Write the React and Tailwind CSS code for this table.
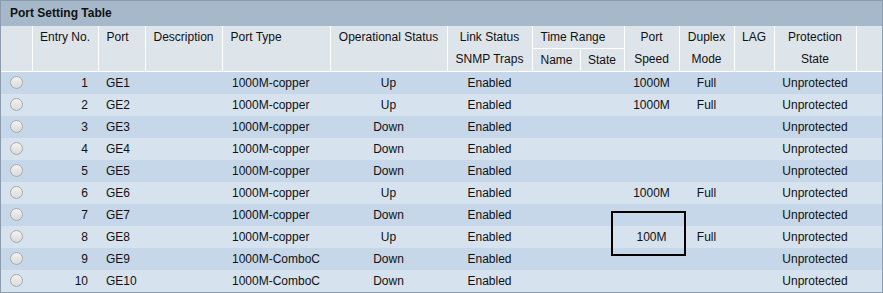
import React from "react";

const ROWS = [
  { no: 1, port: "GE1", type: "1000M-copper", op: "Up", speed: "1000M", duplex: "Full" },
  { no: 2, port: "GE2", type: "1000M-copper", op: "Up", speed: "1000M", duplex: "Full" },
  { no: 3, port: "GE3", type: "1000M-copper", op: "Down", speed: "", duplex: "" },
  { no: 4, port: "GE4", type: "1000M-copper", op: "Down", speed: "", duplex: "" },
  { no: 5, port: "GE5", type: "1000M-copper", op: "Down", speed: "", duplex: "" },
  { no: 6, port: "GE6", type: "1000M-copper", op: "Up", speed: "1000M", duplex: "Full" },
  { no: 7, port: "GE7", type: "1000M-copper", op: "Down", speed: "", duplex: "" },
  { no: 8, port: "GE8", type: "1000M-copper", op: "Up", speed: "100M", duplex: "Full" },
  { no: 9, port: "GE9", type: "1000M-ComboC", op: "Down", speed: "", duplex: "" },
  { no: 10, port: "GE10", type: "1000M-ComboC", op: "Down", speed: "", duplex: "" },
];

const WIDTHS = [31, 66, 47, 77, 108, 117, 85, 48, 44, 55, 55, 40, 82, 26];

function Radio() {
  return (
    <div className="w-[13px] h-[13px] rounded-full border border-[#a9a9a9] bg-gradient-to-b from-[#f4f4f4] to-[#d9d9d9] mx-auto" />
  );
}

export default function App() {
  const th = "bg-[#dde4ea] border-r border-b border-white font-normal align-top px-1 h-[22px] leading-[22px] whitespace-nowrap";

  return (
    <div className="relative w-[883px] bg-white text-[12px] text-[#111] font-['Liberation_Sans',Arial,sans-serif]">
      <div className="border border-[#8c9cae]">
        <div className="h-[25px] bg-[#a5b9cb] font-bold pl-[9px] leading-[25px]">
          Port Setting Table
        </div>
        <table className="table-fixed border-collapse w-[881px]">
          <colgroup>
            {WIDTHS.map((w, i) => (
              <col key={i} style={{ width: w }} />
            ))}
          </colgroup>
          <thead>
            <tr>
              <th rowSpan={2} className={th}></th>
              <th rowSpan={2} className={`${th} text-center`}>Entry No.</th>
              <th rowSpan={2} className={`${th} text-left pl-2`}>Port</th>
              <th rowSpan={2} className={`${th} text-center`}>Description</th>
              <th rowSpan={2} className={`${th} text-left pl-2`}>Port Type</th>
              <th rowSpan={2} className={`${th} text-center`}>Operational Status</th>
              <th rowSpan={2} className={`${th} text-center`}>Link Status<br />SNMP Traps</th>
              <th colSpan={2} className={`${th} text-left pl-2`}>Time Range</th>
              <th rowSpan={2} className={`${th} text-center`}>Port<br />Speed</th>
              <th rowSpan={2} className={`${th} text-center`}>Duplex<br />Mode</th>
              <th rowSpan={2} className={`${th} text-center`}>LAG</th>
              <th rowSpan={2} className={`${th} text-center`}>Protection<br />State</th>
              <th rowSpan={2} className={`${th} border-r-0`}></th>
            </tr>
            <tr>
              <th className={`${th} text-left pl-2`}>Name</th>
              <th className={`${th} text-center`}>State</th>
            </tr>
          </thead>
          <tbody>
            {ROWS.map((r, i) => (
              <tr key={r.no} className={`h-[22px] ${i % 2 === 0 ? "bg-[#c6d7e9]" : "bg-[#d6e2ee]"}`}>
                <td className="p-0"><Radio /></td>
                <td className="text-right pr-[10px]">{r.no}</td>
                <td className="pl-2">{r.port}</td>
                <td></td>
                <td className="pl-[10px]">{r.type}</td>
                <td className="text-center">{r.op}</td>
                <td className="text-center">Enabled</td>
                <td></td>
                <td></td>
                <td className="text-center">{r.speed}</td>
                <td className="text-center">{r.duplex}</td>
                <td></td>
                <td className="text-center">Unprotected</td>
                <td></td>
              </tr>
            ))}
          </tbody>
        </table>
      </div>
      <div className="absolute left-[611px] top-[211px] w-[75px] h-[45px] border-2 border-black" />
    </div>
  );
}
